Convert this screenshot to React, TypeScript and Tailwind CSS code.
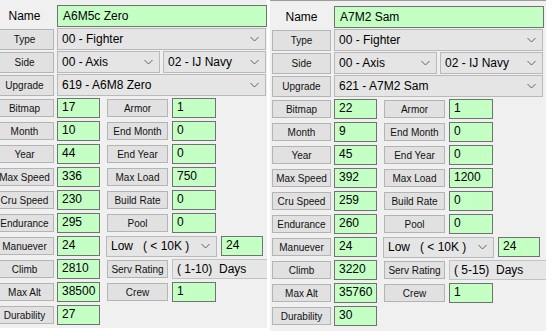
import React from 'react';

type Plane = {
  name: string;
  upgrade: string;
  bitmap: string;
  month: string;
  year: string;
  maxSpeed: string;
  cruSpeed: string;
  endurance: string;
  manuever: string;
  climb: string;
  maxAlt: string;
  durability: string;
  armor: string;
  endMonth: string;
  endYear: string;
  maxLoad: string;
  buildRate: string;
  pool: string;
  altMan: string;
  serv: string;
  crew: string;
};

const planes: Plane[] = [
  {
    name: 'A6M5c Zero', upgrade: '619 - A6M8 Zero', bitmap: '17', month: '10', year: '44',
    maxSpeed: '336', cruSpeed: '230', endurance: '295', manuever: '24', climb: '2810',
    maxAlt: '38500', durability: '27', armor: '1', endMonth: '0', endYear: '0', maxLoad: '750',
    buildRate: '0', pool: '0', altMan: '24', serv: '( 1-10)  Days', crew: '1',
  },
  {
    name: 'A7M2 Sam', upgrade: '621 - A7M2 Sam', bitmap: '22', month: '9', year: '45',
    maxSpeed: '392', cruSpeed: '259', endurance: '260', manuever: '24', climb: '3220',
    maxAlt: '35760', durability: '30', armor: '1', endMonth: '0', endYear: '0', maxLoad: '1200',
    buildRate: '0', pool: '0', altMan: '24', serv: '( 5-15)  Days', crew: '1',
  },
];

const font = { fontFamily: '"Liberation Sans", Arial, sans-serif' };

function Chevron() {
  return (
    <svg width="9" height="5" viewBox="0 0 9 5" className="absolute right-[6px] top-1/2 -translate-y-1/2">
      <path d="M0.5 0.5 L4.5 4.5 L8.5 0.5" fill="none" stroke="#606060" strokeWidth="1" />
    </svg>
  );
}

function Select({ text, w }: { text: string; w: string }) {
  return (
    <div className={`relative h-full ${w} bg-[#e5e5e5] border border-[#b9b9b9] flex items-center pl-[4px] text-[12px] whitespace-pre`}>
      {text}
      <Chevron />
    </div>
  );
}

function Btn({ label, w }: { label: string; w: string }) {
  return (
    <div className={`h-[18px] ${w} shrink-0 bg-[#e1e1e1] border border-[#b4b4b4] flex items-center justify-center text-[10px] text-[#111] whitespace-nowrap`}>
      {label}
    </div>
  );
}

function Green({ v, w }: { v: string; w: string }) {
  return (
    <div className={`h-[20px] ${w} shrink-0 bg-[#c4ffc4] border border-[#6e756e] pl-[4px] text-[12px] leading-[16px]`}>
      {v}
    </div>
  );
}

function Row({ label, v, children }: { label: string; v: string; children?: React.ReactNode }) {
  return (
    <div className="h-[20px] flex items-center">
      <div className="ml-[2px]"><Btn label={label} w="w-[59px]" /></div>
      <div className="ml-[3px]"><Green v={v} w="w-[43px]" /></div>
      {children}
    </div>
  );
}

function Pair({ label, v }: { label: string; v: string }) {
  return (
    <>
      <div className="ml-[7px]"><Btn label={label} w="w-[61px]" /></div>
      <div className="ml-[4px]"><Green v={v} w="w-[44px]" /></div>
    </>
  );
}

function Panel({ p }: { p: Plane }) {
  return (
    <div className="w-[276px] h-full bg-[#f0f0f0] text-black flex flex-col" style={font}>
      <div className="mt-[5px] flex flex-col gap-[1px]">
        <div className="h-[22px] flex items-center">
          <div className="ml-[2px] w-[59px] text-center text-[12px]">Name</div>
          <div className="ml-[3px] h-full w-[210px] bg-[#c4ffc4] border border-[#6e756e] pl-[5px] text-[12px] flex items-center">
            {p.name}
          </div>
        </div>
        <div className="h-[22px] flex items-center">
          <div className="ml-[2px] h-full flex items-center"><Btn label="Type" w="w-[59px] !h-[21px]" /></div>
          <div className="ml-[3px] h-full"><Select text="00 - Fighter" w="w-[209px]" /></div>
        </div>
        <div className="h-[22px] flex items-center">
          <div className="ml-[2px] h-full flex items-center"><Btn label="Side" w="w-[59px] !h-[21px]" /></div>
          <div className="ml-[3px] h-full"><Select text="00 - Axis" w="w-[103px]" /></div>
          <div className="ml-[3px] h-full"><Select text="02 - IJ Navy" w="w-[103px]" /></div>
        </div>
        <div className="h-[22px] flex items-center">
          <div className="ml-[2px] h-full flex items-center"><Btn label="Upgrade" w="w-[59px] !h-[21px]" /></div>
          <div className="ml-[3px] h-full"><Select text={p.upgrade} w="w-[209px]" /></div>
        </div>
      </div>
      <div className="mt-[2px] flex flex-col gap-[3px]">
        <Row label="Bitmap" v={p.bitmap}><Pair label="Armor" v={p.armor} /></Row>
        <Row label="Month" v={p.month}><Pair label="End Month" v={p.endMonth} /></Row>
        <Row label="Year" v={p.year}><Pair label="End Year" v={p.endYear} /></Row>
        <Row label="Max Speed" v={p.maxSpeed}><Pair label="Max Load" v={p.maxLoad} /></Row>
        <Row label="Cru Speed" v={p.cruSpeed}><Pair label="Build Rate" v={p.buildRate} /></Row>
        <Row label="Endurance" v={p.endurance}><Pair label="Pool" v={p.pool} /></Row>
        <Row label="Manuever" v={p.manuever}>
          <div className="ml-[6px] h-[21px]"><Select text="Low   ( < 10K )" w="w-[111px]" /></div>
          <div className="ml-[4px]"><Green v={p.altMan} w="w-[42px]" /></div>
        </Row>
        <Row label="Climb" v={p.climb}>
          <div className="ml-[7px]"><Btn label="Serv Rating" w="w-[61px]" /></div>
          <div className="ml-[4px] h-[20px] w-[100px] shrink-0 bg-[#e6e6e6] border border-[#c2c2c2] pl-[4px] text-[12px] leading-[18px] whitespace-pre">
            {p.serv}
          </div>
        </Row>
        <Row label="Max Alt" v={p.maxAlt}><Pair label="Crew" v={p.crew} /></Row>
        <Row label="Durability" v={p.durability} />
      </div>
    </div>
  );
}

export default function App() {
  return (
    <div className="w-[558px] h-[331px] bg-white flex overflow-hidden">
      <div className="w-[267px] h-[328px] overflow-hidden shrink-0">
        <div className="ml-[-7px] h-full">
          <Panel p={planes[0]} />
        </div>
      </div>
      <div className="ml-[3px] w-[276px] h-[331px] shrink-0 border-t border-[#9c9c9c] overflow-hidden">
        <Panel p={planes[1]} />
      </div>
    </div>
  );
}
